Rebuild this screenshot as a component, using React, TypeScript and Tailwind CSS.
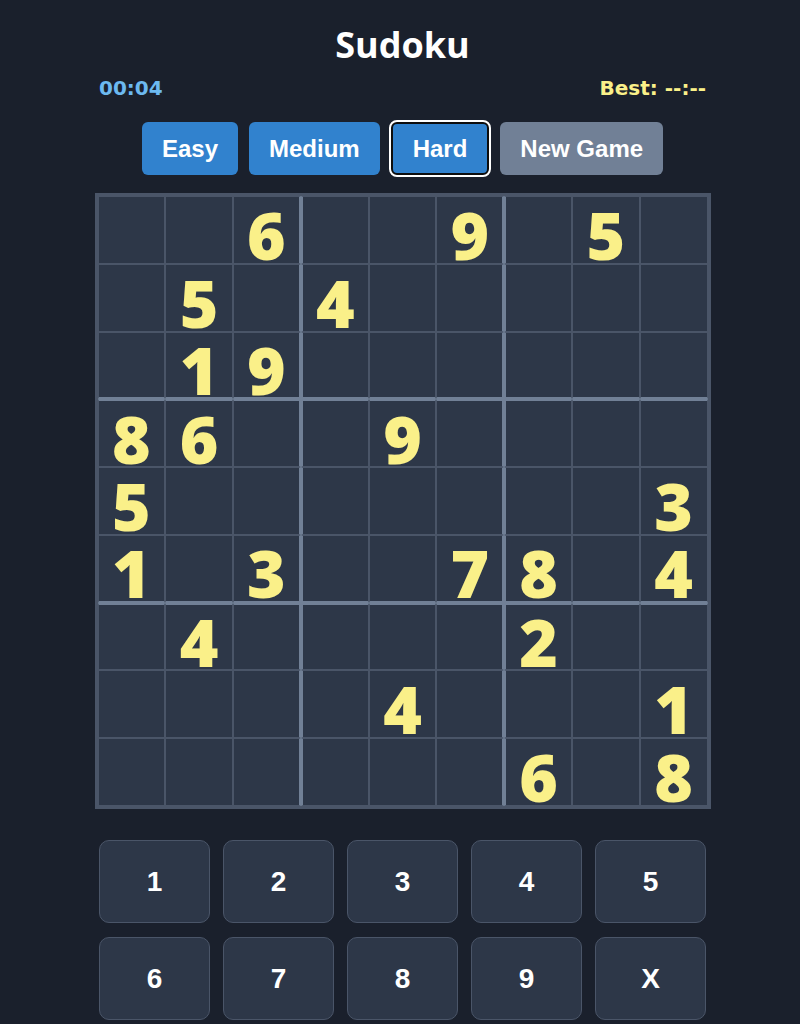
import React from 'react';

const board: (number | null)[][] = [
  [null, null, 6, null, null, 9, null, 5, null],
  [null, 5, null, 4, null, null, null, null, null],
  [null, 1, 9, null, null, null, null, null, null],
  [8, 6, null, null, 9, null, null, null, null],
  [5, null, null, null, null, null, null, null, 3],
  [1, null, 3, null, null, 7, 8, null, 4],
  [null, 4, null, null, null, null, 2, null, null],
  [null, null, null, null, 4, null, null, null, 1],
  [null, null, null, null, null, null, 6, null, 8],
];

const keys = ['1', '2', '3', '4', '5', '6', '7', '8', '9', 'X'];

function Cell({ value, row, col }: { value: number | null; row: number; col: number }) {
  const right = col === 2 || col === 5 ? 'border-r-2 border-r-[#718096]' : '';
  const left = col === 3 || col === 6 ? 'border-l-2 border-l-[#718096]' : '';
  const bottom = row === 2 || row === 5 ? 'border-b-2 border-b-[#718096]' : '';
  const top = row === 3 || row === 6 ? 'border-t-2 border-t-[#718096]' : '';

  return (
    <div
      className={`flex items-center justify-center bg-[#2d3748] border border-[#4a5568] pt-[8px] ${right} ${left} ${bottom} ${top}`}
    >
      {value !== null && (
        <span className="text-[66px] leading-[56px] font-extrabold text-[#faf089] font-['Open_Sans',sans-serif]">
          {value}
        </span>
      )}
    </div>
  );
}

export default function App() {
  return (
    <div className="min-h-screen bg-[#1a202c] flex flex-col items-center pt-[25px] pb-10 pl-[5px]">
      <h1 className="text-4xl leading-10 font-bold text-white font-['Open_Sans',sans-serif]">Sudoku</h1>

      <div className="w-[607px] mt-[9px] flex justify-between items-center text-xl font-bold font-['DejaVu_Sans',sans-serif]">
        <span className="text-[#6cb9f0]">00:04</span>
        <span className="text-[#faf089]">Best: --:--</span>
      </div>

      <div className="mt-[20px] flex items-center gap-[11px] font-['Liberation_Sans',Arial,sans-serif] text-[24px] font-bold text-white">
        <button className="h-[53px] px-5 rounded-md bg-[#3182ce]">Easy</button>
        <button className="h-[53px] px-5 rounded-md bg-[#3182ce]">Medium</button>
        <button className="h-[53px] px-5 rounded-md bg-[#3182ce] border-2 border-[#0d0d0d] outline-2 outline-white">
          Hard
        </button>
        <button className="h-[53px] px-5 rounded-md bg-[#718096]">New Game</button>
      </div>

      <div className="mt-[18px] w-[616px] h-[616px] border-[3px] border-[#4a5568] grid grid-cols-9 grid-rows-9">
        {board.map((r, ri) => r.map((v, ci) => <Cell key={`${ri}-${ci}`} value={v} row={ri} col={ci} />))}
      </div>

      <div className="mt-[31px] w-[607px] grid grid-cols-5 gap-x-[13px] gap-y-[14px]">
        {keys.map((k) => (
          <button
            key={k}
            className="h-[83px] rounded-[10px] bg-[#2d3748] border border-[#4a5568] text-white text-[28px] font-bold font-['Liberation_Sans',Arial,sans-serif]"
          >
            {k}
          </button>
        ))}
      </div>
    </div>
  );
}
